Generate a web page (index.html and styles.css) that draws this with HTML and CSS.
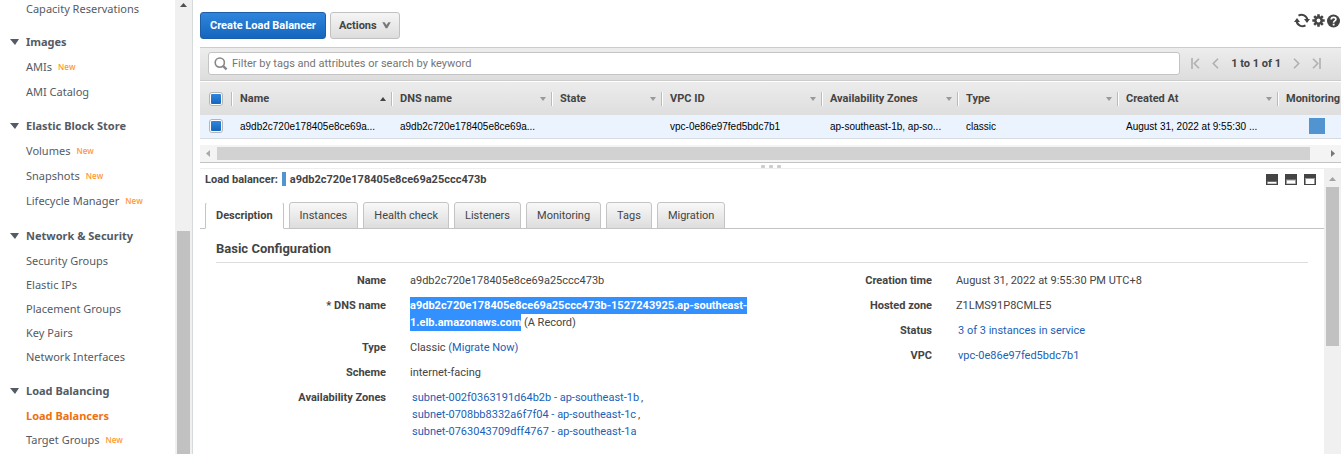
FILE: index.html
```html
<!DOCTYPE html>
<html lang="en">
<head>
<meta charset="utf-8">
<title>Load Balancers</title>
<link rel="stylesheet" href="styles.css">
</head>
<body>
<div class="app">
  <aside class="sidebar">
    <nav class="nav">
      <ul class="nav-list">
        <li><a href="#">Capacity Reservations</a></li>
      </ul>
      <h2 class="nav-heading">Images</h2>
      <ul class="nav-list">
        <li class="has-badge"><a href="#">AMIs</a><span class="new">New</span></li>
        <li><a href="#">AMI Catalog</a></li>
      </ul>
      <h2 class="nav-heading">Elastic Block Store</h2>
      <ul class="nav-list">
        <li class="has-badge"><a href="#">Volumes</a><span class="new">New</span></li>
        <li class="has-badge"><a href="#">Snapshots</a><span class="new">New</span></li>
        <li class="has-badge"><a href="#">Lifecycle Manager</a><span class="new">New</span></li>
      </ul>
      <h2 class="nav-heading">Network &amp; Security</h2>
      <ul class="nav-list">
        <li><a href="#">Security Groups</a></li>
        <li><a href="#">Elastic IPs</a></li>
        <li><a href="#">Placement Groups</a></li>
        <li><a href="#">Key Pairs</a></li>
        <li><a href="#">Network Interfaces</a></li>
      </ul>
      <h2 class="nav-heading">Load Balancing</h2>
      <ul class="nav-list">
        <li><a href="#" class="current">Load Balancers</a></li>
        <li><a href="#">Target Groups</a><span class="new">New</span></li>
      </ul>
    </nav>
    <div class="vbar nav-bar">
      <svg class="arrow" width="7" height="4" viewBox="0 0 7 4"><path d="M0 4 3.5 0 7 4z" fill="#505050"/></svg>
      <div class="thumb"></div>
    </div>
  </aside>

  <main class="main">
    <header class="toolbar">
      <button class="btn primary" type="button">Create Load Balancer</button>
      <button class="btn" type="button">Actions
        <svg width="9" height="7" viewBox="0 0 9 7"><path d="M.3.3H2.6L4.5 3 6.4.3H8.7L5.3 6.2H3.7z" fill="#777"/></svg>
      </button>
      <div class="tools">
        <button class="icon" type="button" aria-label="Refresh">
          <svg width="16" height="15" viewBox="0 0 16 15"><g fill="none" stroke="#444" stroke-width="2"><path d="M4.5 2.6A6 6 0 0 1 13.4 7"/><path d="M11.5 12.4A6 6 0 0 1 2.6 8"/></g><path d="M10 6h6l-3 4zM0 9h6L3 5z" fill="#444"/></svg>
        </button>
        <button class="icon" type="button" aria-label="Settings">
          <svg width="13" height="13" viewBox="-6.5 -6.5 13 13"><g stroke="#444" stroke-width="2.6"><path d="M0-6.2V6.2M-6.2 0H6.2M-4.3-4.3 4.3 4.3M-4.3 4.3 4.3-4.3"/></g><circle r="4.4" fill="#444"/><circle r="1.9" fill="#fff"/></svg>
        </button>
        <button class="icon" type="button" aria-label="Help">
          <svg width="13" height="14" viewBox="0 0 13 14"><circle cx="6.5" cy="7" r="6.5" fill="#444"/><path d="M4.2 5.4C4.2 2.6 8.9 2.7 8.9 5.3 8.9 6.9 6.6 6.9 6.6 8.7" fill="none" stroke="#fff" stroke-width="1.7"/><path d="M5.7 9.7h1.9v1.8H5.7z" fill="#fff"/></svg>
        </button>
      </div>
    </header>

    <div class="filter">
      <label class="search">
        <svg width="14" height="14" viewBox="0 0 14 14"><circle cx="5.8" cy="5.6" r="4.6" fill="none" stroke="#888" stroke-width="1.6"/><path d="M9.2 9.2 12.6 12.4" stroke="#888" stroke-width="2.4"/></svg>
        <input type="text" placeholder="Filter by tags and attributes or search by keyword" aria-label="Filter">
      </label>
      <div class="pager">
        <button class="icon" type="button" aria-label="First page"><svg width="9" height="11" viewBox="0 0 9 11"><path d="M1 0V11M8 .8 3.3 5.5 8 10.2" fill="none" stroke="#b0b0b0" stroke-width="1.6"/></svg></button>
        <button class="icon" type="button" aria-label="Previous page"><svg width="7" height="11" viewBox="0 0 7 11"><path d="M6 .8 1.3 5.5 6 10.2" fill="none" stroke="#b0b0b0" stroke-width="1.6"/></svg></button>
        <span class="range">1 to 1 of 1</span>
        <button class="icon" type="button" aria-label="Next page"><svg width="7" height="11" viewBox="0 0 7 11"><path d="M1 .8 5.7 5.5 1 10.2" fill="none" stroke="#b0b0b0" stroke-width="1.6"/></svg></button>
        <button class="icon" type="button" aria-label="Last page"><svg width="9" height="11" viewBox="0 0 9 11"><path d="M8 0V11M1 .8 5.7 5.5 1 10.2" fill="none" stroke="#b0b0b0" stroke-width="1.6"/></svg></button>
      </div>
    </div>

    <table class="grid">
      <colgroup><col class="c-check"><col class="c-wide"><col class="c-wide"><col class="c-state"><col class="c-wide"><col class="c-zones"><col class="c-wide"><col class="c-wide"><col></colgroup>
      <thead>
        <tr>
          <th><input type="checkbox" class="check" checked aria-label="Select all"></th>
          <th><div class="head asc">Name</div></th>
          <th><div class="head">DNS name</div></th>
          <th><div class="head">State</div></th>
          <th><div class="head">VPC ID</div></th>
          <th><div class="head">Availability Zones</div></th>
          <th><div class="head">Type</div></th>
          <th><div class="head">Created At</div></th>
          <th><div class="head plain">Monitoring</div></th>
        </tr>
      </thead>
      <tbody>
        <tr>
          <td><input type="checkbox" class="check" checked aria-label="Select load balancer"></td>
          <td>a9db2c720e178405e8ce69a...</td>
          <td>a9db2c720e178405e8ce69a...</td>
          <td></td>
          <td>vpc-0e86e97fed5bdc7b1</td>
          <td>ap-southeast-1b, ap-so...</td>
          <td>classic</td>
          <td>August 31, 2022 at 9:55:30 ...</td>
          <td class="monitor"><span class="swatch"></span></td>
        </tr>
      </tbody>
    </table>

    <div class="hbar">
      <svg width="4" height="7" viewBox="0 0 4 7"><path d="M4 0 0 3.5 4 7z" fill="#aaa"/></svg>
      <div class="hthumb"></div>
      <svg width="4" height="7" viewBox="0 0 4 7"><path d="M0 0 4 3.5 0 7z" fill="#777"/></svg>
    </div>

    <div class="splitter"><i></i><i></i><i></i></div>

    <section class="details">
      <div class="pane">
        <div class="title-row">
          <h1 class="title">Load balancer: <span class="mark"></span>a9db2c720e178405e8ce69a25ccc473b</h1>
          <div class="views">
            <button class="icon" type="button" aria-label="Small pane"><svg width="12" height="11" viewBox="0 0 12 11"><path d="M0 0h12v11H0z" fill="#444"/><path d="M1 7.5h10v2.5H1z" fill="#999"/><path d="M2 8h8v1.500H2z" fill="#fff"/></svg></button>
            <button class="icon" type="button" aria-label="Half pane"><svg width="12" height="11" viewBox="0 0 12 11"><path d="M0 0h12v11H0z" fill="#444"/><path d="M1 5.500h10v4.500H1z" fill="#999"/><path d="M2 6.500h8v3H2z" fill="#fff"/></svg></button>
            <button class="icon" type="button" aria-label="Full pane"><svg width="12" height="11" viewBox="0 0 12 11"><path d="M0 0h12v11H0z" fill="#444"/><path d="M1 4h10v6H1z" fill="#999"/><path d="M2 5h8v5H2z" fill="#fff"/></svg></button>
          </div>
        </div>
        <div class="tabs" role="tablist">
          <button class="tab active" role="tab" aria-selected="true" type="button">Description</button>
          <button class="tab" role="tab" type="button">Instances</button>
          <button class="tab" role="tab" type="button">Health check</button>
          <button class="tab" role="tab" type="button">Listeners</button>
          <button class="tab" role="tab" type="button">Monitoring</button>
          <button class="tab" role="tab" type="button">Tags</button>
          <button class="tab" role="tab" type="button">Migration</button>
        </div>
        <div class="panel">
          <h2 class="section">Basic Configuration</h2>
          <div class="columns">
            <dl class="props">
              <dt>Name</dt><dd>a9db2c720e178405e8ce69a25ccc473b</dd>
              <dt>* DNS name</dt><dd><span class="selected">a9db2c720e178405e8ce69a25ccc473b-1527243925.ap-southeast-<wbr>1.elb.amazonaws.com</span> (A Record)</dd>
              <dt>Type</dt><dd>Classic <a href="#">(Migrate Now)</a></dd>
              <dt>Scheme</dt><dd>internet-facing</dd>
              <dt>Availability Zones</dt><dd class="links"><a href="#">subnet-002f0363191d64b2b - ap-southeast-1b</a>,<br><a href="#">subnet-0708bb8332a6f7f04 - ap-southeast-1c</a>,<br><a href="#">subnet-0763043709dff4767 - ap-southeast-1a</a></dd>
            </dl>
            <dl class="props">
              <dt>Creation time</dt><dd>August 31, 2022 at 9:55:30 PM UTC+8</dd>
              <dt>Hosted zone</dt><dd>Z1LMS91P8CMLE5</dd>
              <dt>Status</dt><dd class="links"><a href="#">3 of 3 instances in service</a></dd>
              <dt>VPC</dt><dd class="links"><a href="#">vpc-0e86e97fed5bdc7b1</a></dd>
            </dl>
          </div>
        </div>
      </div>
      <div class="vbar pane-bar">
        <svg class="arrow" width="7" height="4" viewBox="0 0 7 4"><path d="M0 4 3.5 0 7 4z" fill="#a3a3a3"/></svg>
        <div class="thumb"></div>
      </div>
    </section>
  </main>
</div>
</body>
</html>
```
FILE: styles.css
```css
* { box-sizing: border-box; }
body {
  margin: 0;
  background: #fff;
  color: #444;
  font: 11px/17px Roboto, "Liberation Sans", sans-serif;
}
button, input { font: inherit; color: inherit; }
a { color: #1a5fb8; text-decoration: none; }
h1, h2, ul, dl, dd { margin: 0; padding: 0; }
ul { list-style: none; }
svg { display: block; flex: none; }

.app { display: flex; height: 100vh; overflow: hidden; }

.sidebar {
  display: flex;
  flex: none;
  width: 193px;
  border-right: 1px solid #d5dbdb;
  font-family: "Noto Sans", "Open Sans", sans-serif;
}
.nav {
  flex: 1;
  display: flex;
  flex-direction: column;
  overflow: hidden;
  white-space: nowrap;
}
.nav-list { margin: 0 0 10px 26px; }
.nav-list li { display: flex; align-items: center; height: 24px; }
.nav-list:first-child li { height: 19px; padding-bottom: 3px; }
.nav-list .has-badge { height: 25px; }
.nav-list a { color: #545b64; }
.nav-list .current { color: #ec7211; font-weight: 700; }
.new { margin-left: 6px; color: #ff9934; font: 600 8px/17px "Open Sans", sans-serif; }
.nav-heading {
  display: flex;
  align-items: center;
  flex: none;
  height: 25px;
  padding-left: 10px;
  font-size: 11px;
  font-weight: 700;
  color: #545b64;
}
.nav-heading::before {
  content: "";
  margin-right: 7px;
  border: solid transparent;
  border-width: 6px 4px 0 5px;
  border-top-color: #545b64;
}
.vbar {
  display: flex;
  flex-direction: column;
  align-items: center;
  flex: none;
  width: 17px;
  background: #f0f0f0;
}
.vbar .thumb { width: 13px; background: #c1c1c1; }
.nav-bar .arrow { margin-top: 3px; }
.nav-bar .thumb { flex: 1; margin-top: 224px; }
.pane-bar .arrow { margin-top: 8px; }
.pane-bar .thumb { height: 56%; margin-top: 6px; }

.main {
  flex: 1;
  min-width: 0;
  display: flex;
  flex-direction: column;
  padding: 0 3px 0 7px;
}

.toolbar { display: flex; align-items: center; gap: 4px; padding: 12px 0 8px; }
.btn {
  display: flex;
  align-items: center;
  gap: 5px;
  height: 27px;
  padding: 0 8px;
  border: 1px solid #c1c1c1;
  border-radius: 3px;
  background: linear-gradient(#f5f5f5, #ddd);
  font-weight: 700;
}
.btn.primary {
  padding: 0 9px;
  border-color: #1c5fa8;
  background: linear-gradient(#2f86dc, #1565bd);
  color: #fff;
}
.icon { display: flex; padding: 0; border: 0; background: none; }
.tools { display: flex; align-items: center; gap: 2px; margin: -10px 1px 0 auto; }

.filter {
  display: flex;
  align-items: center;
  height: 34px;
  padding: 0 20px 2px 8px;
  border: solid #ccc;
  border-width: 1px 0;
  background: linear-gradient(#ededed, #ddd);
}
.search {
  flex: 1;
  display: flex;
  align-items: center;
  gap: 4px;
  height: 23px;
  padding: 1px 5px 0;
  border: 1px solid #c4c4c4;
  border-radius: 3px;
  background: #fff;
}
.search input { flex: 1; min-width: 0; padding: 0; border: 0; outline: 0; background: none; }
.search input::placeholder { color: #757575; }
.pager { display: flex; align-items: center; gap: 12px; padding-left: 11px; }
.range { font-weight: 700; }

.grid {
  width: 100%;
  margin-top: 1px;
  border-collapse: collapse;
  table-layout: fixed;
}
.c-check { width: 31px; }
.c-wide { width: 160px; }
.c-state { width: 110px; }
.c-zones { width: 136px; }
.grid thead { background: linear-gradient(#ececec, #dedede); }
.grid th { height: 33px; padding: 0; text-align: left; }
.grid td {
  height: 23px;
  padding: 0 0 0 9px;
  border-bottom: 1px solid #d5dbe0;
  white-space: nowrap;
  background: #eaf3fe;
  color: #000;
  font: 10px/17px "Liberation Sans", Arial, sans-serif;
}
.grid th:first-child { padding-left: 9px; }
.head {
  display: flex;
  align-items: center;
  justify-content: space-between;
  height: 14px;
  padding: 0 5px 0 8px;
  border-left: 1px solid #bbb;
  box-shadow: inset 1px 0 #fff;
  white-space: nowrap;
}
.head::after {
  content: "";
  border: solid transparent;
  border-width: 4px 3px 0;
  border-top-color: #999;
}
.head.asc::after { border-width: 0 3px 4px; border-bottom-color: #444; }
.head.plain { padding-right: 0; }
.head.plain::after { display: none; }
.check {
  appearance: none;
  display: block;
  width: 14px;
  height: 14px;
  margin: 0;
  padding: 1px;
  border: 1px solid #b5b5b5;
  border-radius: 3px;
  background: linear-gradient(#2f86dc, #1565bd) content-box, #fff;
}
.grid .monitor { padding-left: 32px; }
.swatch { display: block; width: 16px; height: 16px; background: #5294d0; }

.hbar {
  display: flex;
  align-items: center;
  gap: 7px;
  height: 18px;
  margin-top: 6px;
  padding: 0 6px;
  border-bottom: 1px solid #c4c4c4;
  background: #f4f4f4;
}
.hthumb { flex: 1; height: 13px; margin-right: 14px; background: #d2d2d2; }
.splitter {
  display: flex;
  align-items: flex-end;
  justify-content: center;
  gap: 4px;
  height: 6px;
  border-bottom: 1px solid #eee;
}
.splitter i { width: 4px; height: 3px; border-radius: 1px; background: #ccc; }

.details { flex: 1; min-height: 0; display: flex; }
.pane { flex: 1; min-width: 0; }
.title-row {
  display: flex;
  align-items: center;
  justify-content: space-between;
  padding: 2px 8px 0 5px;
}
.title { display: flex; align-items: center; gap: 4px; font-size: 11px; line-height: 17px; }
.mark { width: 4px; height: 14px; background: #5294d0; }
.views { display: flex; gap: 7px; }
.tabs {
  display: flex;
  gap: 5px;
  margin-top: 14px;
  padding-left: 5px;
  border-bottom: 1px solid #c4c4c4;
}
.tab {
  height: 27px;
  margin-bottom: -1px;
  padding: 0 10px;
  border: 1px solid #c4c4c4;
  border-radius: 3px 3px 0 0;
  background: linear-gradient(#f8f8f8, #ddd);
}
.tab.active {
  border-top-color: #fff;
  border-bottom-color: #fff;
  background: #fff;
  font-weight: 700;
}
.panel { padding: 11px 16px 0; }
.section {
  padding-bottom: 4px;
  border-bottom: 1px solid #ddd;
  font-size: 13px;
  line-height: 18px;
  font-weight: 700;
}
.columns { display: grid; grid-template-columns: 1fr 1fr; margin-top: 9px; }
.props {
  display: grid;
  grid-template-columns: 170px minmax(0, 342px);
  column-gap: 24px;
  row-gap: 8px;
  align-content: start;
}
.props dt { font-weight: 700; text-align: right; }
.links a { padding: 0 2px; }
.selected { padding: 2px 0; background: #3390ff; color: #fff; font-weight: 700; }
```
